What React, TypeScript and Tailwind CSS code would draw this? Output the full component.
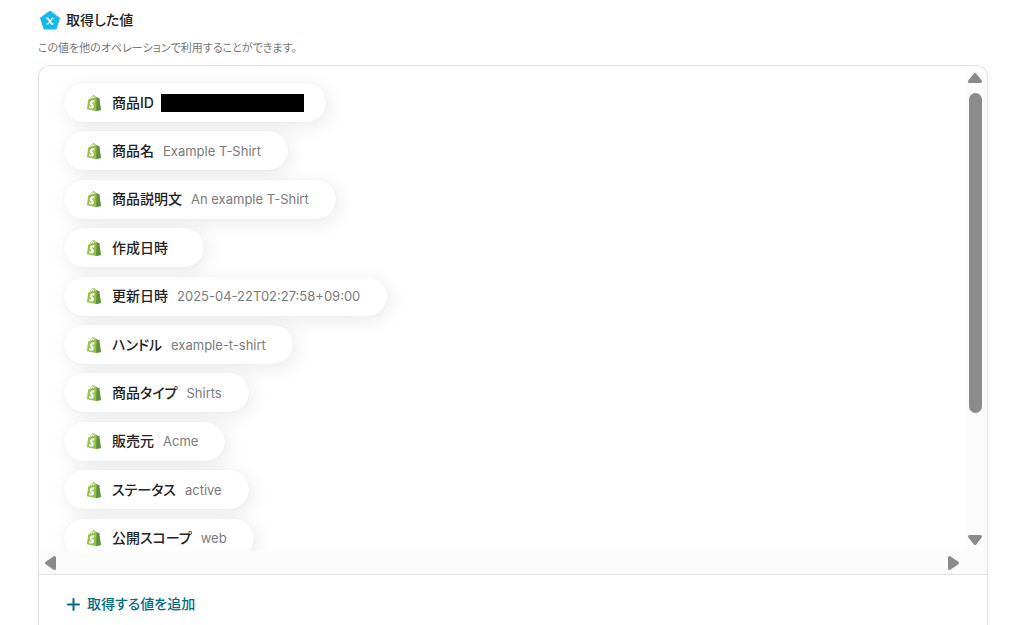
import React from "react";

const fields = [
  { id: 1, label: "商品ID", value: "", masked: true },
  { id: 2, label: "商品名", value: "Example T-Shirt" },
  { id: 3, label: "商品説明文", value: "An example T-Shirt" },
  { id: 4, label: "作成日時", value: "" },
  { id: 5, label: "更新日時", value: "2025-04-22T02:27:58+09:00" },
  { id: 6, label: "ハンドル", value: "example-t-shirt" },
  { id: 7, label: "商品タイプ", value: "Shirts" },
  { id: 8, label: "販売元", value: "Acme" },
  { id: 9, label: "ステータス", value: "active" },
  { id: 10, label: "公開スコープ", value: "web" },
];

const ShopifyIcon = () => (
  <svg viewBox="0 0 256 292" className="h-4 w-4 shrink-0" aria-hidden="true">
    <path
      fill="#95BF46"
      d="M223.774 57.34c-.201-1.46-1.48-2.268-2.537-2.357-1.055-.088-23.383-1.743-23.383-1.743s-15.507-15.395-17.209-17.099c-1.703-1.703-5.029-1.185-6.32-.805-.19.056-3.388 1.043-8.678 2.68-5.18-14.906-14.322-28.604-30.405-28.604-.444 0-.901.018-1.358.044C129.31 3.407 123.644.779 118.75.779c-37.465 0-55.364 46.835-60.976 70.635-14.558 4.511-24.9 7.718-26.221 8.133-8.126 2.549-8.383 2.805-9.45 10.462C21.3 95.806.038 260.235.038 260.235l165.678 31.042 89.77-19.42S223.973 58.8 223.775 57.34zM156.49 40.848l-14.019 4.339c.005-.988.01-1.96.01-3.023 0-9.264-1.286-16.723-3.349-22.636 8.287 1.04 13.806 10.469 17.358 21.32zm-27.638-19.483c2.304 5.773 3.802 14.058 3.802 25.238 0 .572-.005 1.095-.01 1.624-9.117 2.824-19.024 5.89-28.953 8.966 5.575-21.516 16.025-31.908 25.161-35.828zm-11.131-10.537c1.617 0 3.246.549 4.805 1.622-12.007 5.65-24.877 19.88-30.312 48.297l-22.886 7.088C75.694 46.16 90.81 10.828 117.72 10.828z"
    />
    <path
      fill="#5E8E3E"
      d="M221.237 54.983c-1.055-.088-23.383-1.743-23.383-1.743s-15.507-15.395-17.209-17.099c-.637-.634-1.496-.959-2.394-1.099l-12.527 256.233 89.762-19.418S223.972 58.8 223.774 57.34c-.201-1.46-1.48-2.268-2.537-2.357"
    />
    <path
      fill="#FFF"
      stroke="#FFF"
      strokeWidth="8"
      d="M135.242 104.585l-11.069 32.926s-9.698-5.176-21.586-5.176c-17.428 0-18.305 10.937-18.305 13.693 0 15.038 39.2 20.8 39.2 56.024 0 27.713-17.577 45.558-41.277 45.558-28.44 0-42.984-17.7-42.984-17.7l7.615-25.16s14.95 12.835 27.565 12.835c8.243 0 11.596-6.49 11.596-11.232 0-19.616-32.16-20.491-32.16-52.724 0-27.129 19.472-53.382 58.778-53.382 15.145 0 22.627 4.338 22.627 4.338"
    />
  </svg>
);

const VariableIcon = () => (
  <svg viewBox="0 0 20 20" className="h-5 w-5 shrink-0" aria-hidden="true">
    <path
      fill="#12B9ED"
      stroke="#12B9ED"
      strokeWidth="2"
      strokeLinejoin="round"
      d="M10 1.8 18.9 8.2 15.6 18.4H4.4L1.1 8.2Z"
    />
    <path
      fill="none"
      stroke="#fff"
      strokeWidth="1.8"
      d="M6.4 8.3H7.8L11.8 13.9H13.4"
    />
    <path
      fill="none"
      stroke="#fff"
      strokeWidth="1.3"
      d="M13.6 8.3H12.4L8 13.9H6.4"
    />
  </svg>
);

const Arrow = ({ path, label }: { path: string; label: string }) => (
  <button type="button" aria-label={label} className="block h-4 w-4">
    <svg viewBox="0 0 16 16" className="h-4 w-4">
      <path
        d={path}
        fill="#8b8b8b"
        stroke="#8b8b8b"
        strokeWidth="3"
        strokeLinejoin="round"
      />
    </svg>
  </button>
);

const Pill = ({ field }: { field: (typeof fields)[number] }) => (
  <div
    className={`flex h-[39px] items-center rounded-full bg-white pl-[22px] shadow-[3px_4px_20px_rgba(0,0,0,0.09),0_0_2px_rgba(0,0,0,0.06)] ${
      field.masked ? "pr-[22px]" : "pr-[27px]"
    }`}
  >
    <ShopifyIcon />
    <span className="ml-[10px] text-sm leading-5 font-medium">
      {field.label}
    </span>
    {field.masked ? (
      <span className="ml-[7px] h-[18px] w-[143px] bg-black" />
    ) : (
      <span className="ml-[9px] text-[13px] leading-5 text-[#7b7b7b]">
        {field.value}
      </span>
    )}
  </div>
);

const App = () => {
  return (
    <div className="h-screen overflow-hidden bg-white pt-2 pr-[30px] pl-[38px] font-['Inter','Noto_Sans_CJK_JP',sans-serif] text-[#222] [font-feature-settings:'palt']">
      <div className="flex items-center gap-[6px] pl-[2px]">
        <VariableIcon />
        <h2 className="text-sm leading-6 font-medium">取得した値</h2>
      </div>
      <p className="mt-2 text-[11px] leading-4 text-[#777]">
        この値を他のオペレーションで利用することができます。
      </p>

      <section className="mt-[9px] overflow-hidden rounded-t-xl border border-b-0 border-[#e2e2e2]">
        <div className="flex h-[485px]">
          <div className="min-w-0 flex-1 overflow-hidden pt-[17px] pl-[25px]">
            <ul className="grid h-[484px] auto-rows-fr">
              {fields.map((field) => (
                <li key={field.id} className="flex items-start">
                  <Pill field={field} />
                </li>
              ))}
            </ul>
          </div>
          <div className="flex w-[21px] flex-col items-center bg-[#fcfcfc] pt-1 pr-[3px] pb-[3px]">
            <Arrow label="上へスクロール" path="M8 4.5 13.5 11.5H2.5Z" />
            <div className="mt-[7px] mb-auto h-[320px] w-[13px] rounded-full bg-[#8b8b8b]" />
            <Arrow label="下へスクロール" path="M2.5 4.5H13.5L8 11.5Z" />
          </div>
        </div>
        <div className="flex h-[23px] items-center justify-between bg-[#fcfcfc] pr-[26px] pl-1">
          <Arrow label="左へスクロール" path="M11.5 2.5V13.5L3.5 8Z" />
          <Arrow label="右へスクロール" path="M4.5 2.5 12.5 8 4.5 13.5Z" />
        </div>
        <div className="border-t border-[#e2e2e2] px-7 pt-[19px] pb-8">
          <button
            type="button"
            className="flex items-center gap-[7px] text-sm leading-5 font-medium text-[#006c86]"
          >
            <svg viewBox="0 0 13 13" className="h-[13px] w-[13px]">
              <path
                d="M6.5 1V12M1 6.5H12"
                stroke="currentColor"
                strokeWidth="2"
                strokeLinecap="round"
              />
            </svg>
            取得する値を追加
          </button>
        </div>
      </section>
    </div>
  );
};

export default App;
